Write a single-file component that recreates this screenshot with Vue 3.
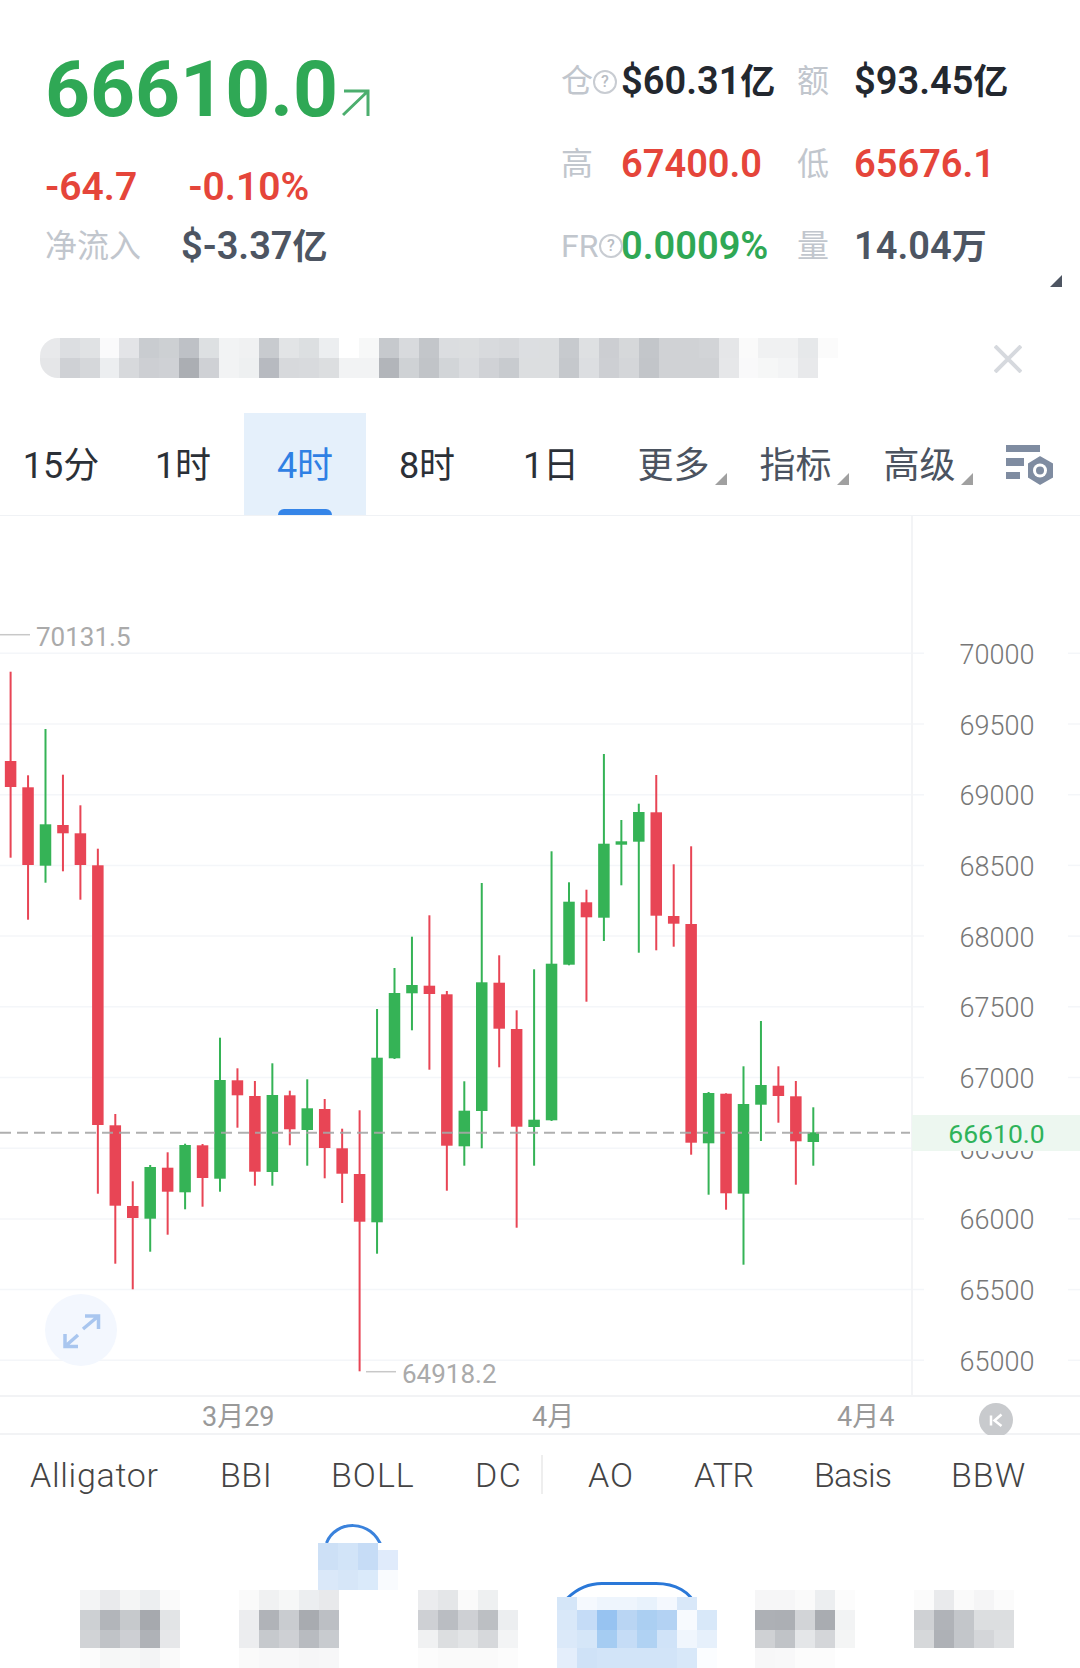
<script setup>
const hex = (s) => s.trim().split(/\s+/).map((c) => '#' + c)

const banner = hex(`
e8e9eb dcdee1 e0e2e4 fafafb e3e4e7 c9ccd0 cdd0d3 bec1c6 dde0e2 f2f3f4 f0f1f2 c8cbcf e2e4e6 dcdfe1 eceef0 ffffff f7f8f8 c6c9cd d8dadd c3c6ca dbdde0 dcdee0 d8dadd d6d8db dcdee1 dcdee0 c7cace dee0e2 ccced2 d6d8da c3c6ca d0d2d5 d0d2d5 d2d4d7 e5e6e8 fafafa f0f1f2 f0f1f2 e6e8ea fbfbfb
e5e6e8 cfd1d5 d5d7da eceef0 d7d9dc cdcfd3 cfd1d5 abaeb3 cfd1d5 f2f3f4 eef0f1 b7bac0 d7d9dc d8dadd dcdee0 f2f3f4 f2f3f4 b2b5ba cfd2d5 c1c4c8 d2d5d8 dadcdf d0d2d6 c8cbcf dcdee0 dcdee0 c5c8cc dcdee1 cdcfd3 d4d6d9 c2c5c9 d0d2d5 d0d2d5 d0d2d5 e6e7e9 f9f9fa f6f7f7 f3f4f5 e8e9eb ffffff
`)

const nav = [
  { gap: 79.5, cols: 5, rows: '20px 20px 18px 20px', cells: hex(`
    f3f4f5 e9eaec f4f5f5 eceef0 fafafa
    cdd0d3 b2b5ba c6c9cc a6a9ae e2e4e6
    d1d3d6 c0c3c7 cdcfd3 afb2b7 e6e7e9
    fcfcfc f6f7f7 f7f8f8 f3f4f5 fafafa`) },
  { gap: 59, cols: 5, rows: '20px 20px 18px 20px', cells: hex(`
    fafafa f0f1f2 f6f7f7 eceef0 e8e9eb
    ecedef b0b3b8 c9ccd0 a8abb0 bcbfc4
    ecedef c6c9cd ced0d4 b8bbc0 c8cbcf
    fafafa f8f8f9 f8f8f9 f6f6f7 f7f7f8`) },
  { gap: 79, cols: 5, rows: '20px 20px 18px 20px', cells: hex(`
    ebecee e4e6e8 fafafa eef0f1 ffffff
    ced0d4 babdc2 ced0d4 bcbfc3 eceef0
    f0f1f2 dcdee0 e2e4e6 d6d8db f3f4f5
    fcfcfc fafafa fafafa fafafa fcfcfc`) },
  { gap: 39, cols: 8, rows: '13px 20px 18px 20px', cells: hex(`
    d5e6f8 f5f9fe eef5fd eef5fd e8f2fc f4f8fe d9e8f9 ffffff
    d9e8f9 c5dcf7 97c3f1 b9d5f3 abcff2 b3d2f3 f7fafe d8e8f9
    dbe9f9 d5e6f8 a5ccf2 c5dcf6 b0d2f3 d0e3f8 f0f6fd e6f0fb
    e4eefb cfe2f7 d2e4f8 d2e4f8 d2e4f8 d2e4f8 d8e8f9 fbfdff`) },
  { gap: 38.5, cols: 5, rows: '20px 20px 18px 20px', cells: hex(`
    f6f6f7 f6f6f7 fafafa eceef0 fcfcfc
    adb0b5 acafb4 d2d4d7 a9acb1 f2f3f4
    cfd1d4 c0c3c7 e4e6e8 d4d6d9 f4f5f5
    f7f7f8 f8f8f9 fcfcfc fcfcfc ffffff`) },
  { gap: 59, cols: 5, rows: '20px 20px 18px 20px', cells: hex(`
    fbfbfb e9eaec fafafa f5f5f6 fbfbfb
    cfd1d4 b0b3b8 c3c6ca dcdee0 dcdee0
    d6d8da aeb1b6 c3c6ca d4d6d9 dee0e2
    ffffff ffffff ffffff ffffff ffffff`) },
]

const floating = hex(`
  cde0f6 d2e4f8 c6dcf6 ffffff
  cde0f6 d2e4f8 c6dcf6 e0ebfb
  dae8f9 d6e6f8 daeafa f9fbfe`)

const tabs = [
  { label: '15分' },
  { label: '1时' },
  { label: '4时', active: true },
  { label: '8时' },
  { label: '1日' },
  { label: '更多', menu: true },
  { label: '指标', menu: true },
  { label: '高级', menu: true },
]

const indicators = [
  { name: 'Alligator', width: 128, track: 0.7 },
  { name: 'BBI', width: 49, track: 0.5 },
  { name: 'BOLL', width: 82, track: 1 },
  { name: 'DC', width: 44, track: 1.5 },
  { name: '|' },
  { name: 'AO', width: 44, track: 1 },
  { name: 'ATR', width: 58, track: -0.4 },
  { name: 'Basis', width: 75, track: -0.8 },
  { name: 'BBW', width: 73, track: 1 },
]

const axis = [70000, 69500, 69000, 68500, 68000, 67500, 67000, 66500, 66000, 65500, 65000].map((v, i) => ({
  v,
  y: 653.3 + 70.7 * i,
}))

// high, body top, body bottom, low, colour
const raw = [
  [671.7, 761, 787, 857.7, 'r'],
  [775.3, 787.3, 865, 919.7, 'r'],
  [729, 824.3, 865.7, 882.7, 'g'],
  [774.7, 825, 833.3, 871.3, 'r'],
  [805.3, 833.3, 865, 899.7, 'r'],
  [848.7, 865.3, 1125, 1193.7, 'r'],
  [1114, 1125.3, 1205.7, 1263.7, 'r'],
  [1181.3, 1206, 1218, 1289.3, 'r'],
  [1165, 1167, 1218.7, 1251.7, 'g'],
  [1152.3, 1167.7, 1191.7, 1234.7, 'r'],
  [1143.7, 1145, 1192.3, 1209.3, 'g'],
  [1144, 1145.3, 1178, 1206.7, 'r'],
  [1037.7, 1080, 1178.7, 1191.7, 'g'],
  [1068.3, 1080.3, 1095.3, 1127.7, 'r'],
  [1081, 1096, 1171.7, 1185.7, 'r'],
  [1063.3, 1095, 1172, 1185.7, 'g'],
  [1090.7, 1095.3, 1129.3, 1145.3, 'r'],
  [1079.3, 1108.3, 1130, 1165.7, 'g'],
  [1099, 1109, 1148, 1178.3, 'r'],
  [1128.7, 1148.3, 1173.7, 1203, 'r'],
  [1110.3, 1174, 1221.7, 1371.3, 'r'],
  [1009, 1057.7, 1222.3, 1253.7, 'g'],
  [968, 993, 1058.3, 1059, 'g'],
  [936.7, 985, 993.3, 1030.3, 'g'],
  [915.3, 985.7, 994, 1069.7, 'r'],
  [991, 994.3, 1145.7, 1190.7, 'r'],
  [1081.3, 1110.7, 1146.3, 1165.7, 'g'],
  [883, 982.3, 1111, 1148.3, 'g'],
  [955.3, 982.7, 1028.7, 1067.3, 'r'],
  [1010.3, 1029, 1126.7, 1227.7, 'r'],
  [969.3, 1119.7, 1127, 1165.7, 'g'],
  [851.3, 963.7, 1120.3, 1121, 'g'],
  [882.3, 901.7, 964.7, 965.3, 'g'],
  [889.7, 902.3, 917.3, 1001.7, 'r'],
  [754, 843.7, 917.7, 941, 'g'],
  [820, 841.3, 844.7, 885.3, 'g'],
  [803.7, 812, 841.7, 952.7, 'g'],
  [775, 812.3, 915.7, 950.3, 'r'],
  [864.3, 916, 923.7, 946.7, 'r'],
  [846.3, 924, 1142.7, 1154.7, 'r'],
  [1092, 1093, 1143.3, 1194.7, 'g'],
  [1093.3, 1093.7, 1193.3, 1209.7, 'r'],
  [1066.3, 1104, 1193.7, 1264.7, 'g'],
  [1021, 1085, 1104.7, 1141, 'g'],
  [1066.3, 1085.7, 1096, 1122.7, 'r'],
  [1081, 1096.3, 1141.3, 1184.7, 'r'],
  [1107.3, 1132.3, 1142, 1165.7, 'g'],
]
const candles = raw.map(([high, top, bot, low, c], i) => ({
  x: 10.6 + 17.45 * i,
  high,
  top,
  bot,
  low,
  fill: c === 'r' ? '#e84555' : '#35b356',
}))
</script>

<template>
  <div class="page">
    <header class="quote">
      <div class="quote-left">
        <div class="price-row">
          <span class="price">66610.0</span>
          <svg class="trend" width="28" height="28" viewBox="0 0 28 28">
            <path d="M2 2H26V27M26 2L1 26" fill="none" stroke="#4cae6e" stroke-width="3" />
          </svg>
        </div>
        <div class="change-row">
          <span class="change">-64.7</span>
          <span class="change">-0.10%</span>
        </div>
        <div class="flow-row">
          <span class="label flow-label">净流入</span>
          <span class="flow-value">$-3.37<span class="unit">亿</span></span>
        </div>
      </div>
      <div class="quote-right">
        <span class="label with-help">仓<i class="help">?</i></span>
        <span class="val dark">$60.31<span class="unit">亿</span></span>
        <span class="label">额</span>
        <span class="val dark">$93.45<span class="unit">亿</span></span>

        <span class="label">高</span>
        <span class="val red">67400.0</span>
        <span class="label">低</span>
        <span class="val red">65676.1</span>

        <span class="label with-help fr">FR<i class="help">?</i></span>
        <span class="val green">0.0009%</span>
        <span class="label">量</span>
        <span class="val slate">14.04<span class="unit">万</span></span>
      </div>
      <i class="corner"></i>
    </header>

    <section class="banner">
      <div class="banner-mosaic">
        <i v-for="(c, i) in banner" :key="i" :style="{ background: c }"></i>
      </div>
      <svg class="close" width="28" height="28" viewBox="0 0 28 28">
        <path d="M1 1L27 27M27 1L1 27" stroke="#d6d9de" stroke-width="4" fill="none" />
      </svg>
    </section>

    <nav class="tabs">
      <div
        v-for="t in tabs"
        :key="t.label"
        class="tab"
        :class="{ active: t.active, menu: t.menu }"
      >
        {{ t.label }}
      </div>
      <svg class="tool" width="48" height="42" viewBox="0 0 48 42">
        <path d="M0 0H34V7H0zM0 13H18V21H0zM0 27H14V34H0z" fill="#7f8ca1" />
        <path d="M34 10L48 18V33L34 41L21 33V18Z" fill="#7f8ca1" stroke="#fff" stroke-width="2" />
        <circle cx="34" cy="25.5" r="7" fill="#fff" />
        <circle cx="34" cy="25.5" r="4" fill="#7f8ca1" />
      </svg>
    </nav>

    <svg class="chart" width="1080" height="919" viewBox="0 516 1080 919">
      <g stroke="#f4f6f9" stroke-width="1.5">
        <template v-for="a in axis" :key="a.v">
          <line x1="0" x2="924" :y1="a.y" :y2="a.y" />
          <line x1="1068" x2="1080" :y1="a.y" :y2="a.y" />
        </template>
      </g>
      <line x1="912" x2="912" y1="516" y2="1396" stroke="#f3f4f6" stroke-width="2" />
      <line x1="0" x2="1080" y1="1396" y2="1396" stroke="#f2f3f5" stroke-width="2" />
      <line x1="0" x2="1080" y1="1434" y2="1434" stroke="#f2f3f5" stroke-width="2" />

      <text
        v-for="a in axis"
        :key="'t' + a.v"
        class="axis-text"
        x="997"
        :y="a.y + 10.5"
        text-anchor="middle"
      >{{ a.v }}</text>

      <g v-for="(k, i) in candles" :key="i" :fill="k.fill">
        <rect :x="k.x - 1" :y="k.high" width="2" :height="k.low - k.high" />
        <rect :x="k.x - 5.75" :y="k.top" width="11.5" :height="k.bot - k.top" />
      </g>

      <line x1="0" x2="910" y1="1132.7" y2="1132.7" stroke="#a6a6a6" stroke-opacity="0.9" stroke-width="2" stroke-dasharray="11 6" />
      <rect x="912" y="1115" width="168" height="36" fill="#edf7f0" />
      <text class="tag-text" x="996.500" y="1143" text-anchor="middle">66610.0</text>

      <line x1="0" x2="30" y1="634.7" y2="634.7" stroke="#c8c8c8" stroke-width="1.5" />
      <text class="extreme" x="36" y="646">70131.5</text>
      <line x1="366" x2="396" y1="1371.7" y2="1371.7" stroke="#c8c8c8" stroke-width="1.5" />
      <text class="extreme" x="402" y="1383">64918.2</text>

      <circle cx="81" cy="1330" r="36" fill="#f3f7fe" />
      <path
        d="M85 1316H98.500V1329M98.500 1316L83 1329M78 1346.500H65V1334M65 1346.500L78 1335"
        fill="none"
        stroke="#a9c6ef"
        stroke-width="3.500"
      />

      <text class="date" x="202" y="1426">3月29</text>
      <text class="date" x="532" y="1426">4月</text>
      <text class="date" x="837" y="1426">4月4</text>
      <circle cx="996" cy="1420" r="17" fill="#c8cacd" />
      <path d="M991 1415.500V1425.500M1001.500 1414.500L994.500 1420.500L1001.500 1426" fill="none" stroke="#fff" stroke-width="2.500" />
    </svg>

    <div class="indicators">
      <template v-for="n in indicators" :key="n.name">
        <i v-if="n.name === '|'" class="divider"></i>
        <span v-else class="indicator" :style="{ width: n.width + 'px', letterSpacing: n.track + 'px' }">{{ n.name }}</span>
      </template>
    </div>

    <svg class="arcs" width="1080" height="100" viewBox="0 1520 1080 100">
      <path d="M326.500 1543C335 1520 372 1518 382 1548" fill="none" stroke="#3a82dc" stroke-width="3" />
      <path d="M567.500 1598C578 1588 590 1583.500 602 1583.500H656C676 1583.500 690 1592 696 1606" fill="none" stroke="#2a78d8" stroke-width="3" />
    </svg>

    <div class="floating">
      <i v-for="(c, i) in floating" :key="i" :style="{ background: c }"></i>
    </div>

    <div class="bottom-nav">
      <div
        v-for="(m, i) in nav"
        :key="i"
        class="nav-mosaic"
        :style="{
          marginLeft: m.gap + 'px',
          gridTemplateColumns: `repeat(${m.cols}, 20px)`,
          gridTemplateRows: m.rows,
        }"
      >
        <i v-for="(c, j) in m.cells" :key="j" :style="{ background: c }"></i>
      </div>
    </div>
  </div>
</template>

<style scoped>
.page {
  position: relative;
  width: 1080px;
  height: 1668px;
  overflow: hidden;
  background: #fff;
  font-family: Roboto, 'Noto Sans CJK SC', sans-serif;
}
i {
  display: block;
  font-style: normal;
}
.quote {
  position: relative;
  display: flex;
  height: 300px;
}
.quote-left {
  width: 561px;
  padding: 44px 0 0 45px;
  box-sizing: border-box;
}
.price-row {
  display: flex;
  height: 90px;
  line-height: 90px;
}
.price {
  font-size: 78.500px;
  font-weight: 700;
  color: #2fa855;
}
.trend {
  margin: 45px 0 0 4px;
}
.change-row {
  display: flex;
  gap: 51px;
  height: 40px;
  margin-top: 33px;
  line-height: 40px;
}
.change {
  font-size: 39px;
  font-weight: 600;
  color: #e5453a;
}
.flow-row {
  display: flex;
  height: 40px;
  margin-top: 19px;
  line-height: 40px;
}
.label {
  font-size: 32px;
  color: #c1c6cd;
  font-weight: 400;
  height: 40px;
  line-height: 40px;
}
.flow-label {
  width: 136px;
}
.flow-value {
  font-size: 38px;
  font-weight: 600;
  color: #4d5562;
}
.unit {
  font-size: 35px;
}
.quote-right {
  display: grid;
  grid-template-columns: 60px 176px 57px auto;
  grid-auto-rows: 40px;
  row-gap: 42.500px;
  padding-top: 61px;
  align-content: start;
}
.with-help {
  position: relative;
  white-space: nowrap;
}
.help {
  position: absolute;
  left: 32px;
  top: 9px;
  width: 20px;
  height: 20px;
  border: 2px solid #c8ccd2;
  border-radius: 50%;
  font-size: 16px;
  line-height: 20px;
  text-align: center;
  color: #b8bdc4;
  font-weight: 500;
}
.fr .help {
  left: 38px;
  top: 8px;
}
.val {
  font-size: 38px;
  font-weight: 600;
  line-height: 40px;
  white-space: nowrap;
}
.dark {
  color: #23282f;
}
.red {
  color: #e5453a;
}
.green {
  color: #2fa855;
}
.slate {
  color: #4d5562;
}
.corner {
  position: absolute;
  left: 1050px;
  top: 275px;
  width: 12px;
  height: 12px;
  background: #4d5562;
  clip-path: polygon(100% 0, 100% 100%, 0 100%);
}
.banner {
  display: flex;
  align-items: center;
  justify-content: space-between;
  height: 40px;
  margin-top: 38px;
  padding: 0 58px 0 39.6px;
}
.banner-mosaic {
  display: grid;
  grid-template-columns: repeat(40, 19.97px);
  grid-auto-rows: 20px;
  border-radius: 18px 0 0 18px;
  overflow: hidden;
}
.close {
  margin-top: 2px;
}
.tabs {
  display: flex;
  align-items: flex-start;
  height: 102px;
  margin-top: 35px;
  border-bottom: 1px solid #f0f2f5;
}
.tab {
  position: relative;
  box-sizing: border-box;
  width: 122px;
  height: 102px;
  font-size: 36px;
  line-height: 106px;
  text-align: center;
  color: #2b3037;
}
.tab:nth-child(5) {
  padding-left: 4px;
}
.tab.active {
  background: #e5f0fb;
  color: #2f80e4;
}
.tab.active::after {
  content: '';
  position: absolute;
  left: 34px;
  bottom: 0;
  width: 54px;
  height: 6px;
  background: #3585e8;
  border-radius: 6px 6px 0 0;
}
.tab.menu {
  color: #4b5360;
  padding-left: 5px;
}
.tab.menu:nth-child(8) {
  padding-left: 9px;
}
.tab.menu::after {
  content: '';
  position: absolute;
  right: 5px;
  top: 60px;
  width: 12px;
  height: 12px;
  background: #a0a0a0;
  clip-path: polygon(100% 0, 100% 100%, 0 100%);
}
.tab.menu:nth-child(8)::after {
  right: 3px;
}
.tool {
  flex: none;
  margin: 32px 0 0 30px;
}
.chart {
  display: block;
}
.axis-text {
  font-size: 27px;
  font-weight: 300;
  fill: #777777;
}
.tag-text {
  font-size: 26.500px;
  fill: #2fb35a;
}
.extreme {
  font-size: 26px;
  fill: #aaaaaa;
}
.date {
  font-size: 27px;
  fill: #999999;
}
.indicators {
  display: flex;
  align-items: center;
  gap: 62px;
  height: 79px;
  padding-left: 30px;
  font-size: 34px;
  font-weight: 300;
  color: #444444;
}
.indicator {
  flex: none;
  text-align: center;
  white-space: nowrap;
}
.divider {
  flex: none;
  width: 2px;
  height: 39px;
  margin: 0 -17px 0 -40px;
  background: #eeeeee;
}
.arcs {
  position: absolute;
  left: 0;
  top: 1520px;
}
.floating {
  position: absolute;
  left: 318px;
  top: 1543px;
  display: grid;
  grid-template-columns: repeat(4, 20px);
  grid-template-rows: 7px 20px 20px;
}
.bottom-nav {
  position: absolute;
  left: 0;
  right: 0;
  bottom: 0;
  display: flex;
  align-items: flex-end;
}
.nav-mosaic {
  display: grid;
  flex: none;
}
</style>
